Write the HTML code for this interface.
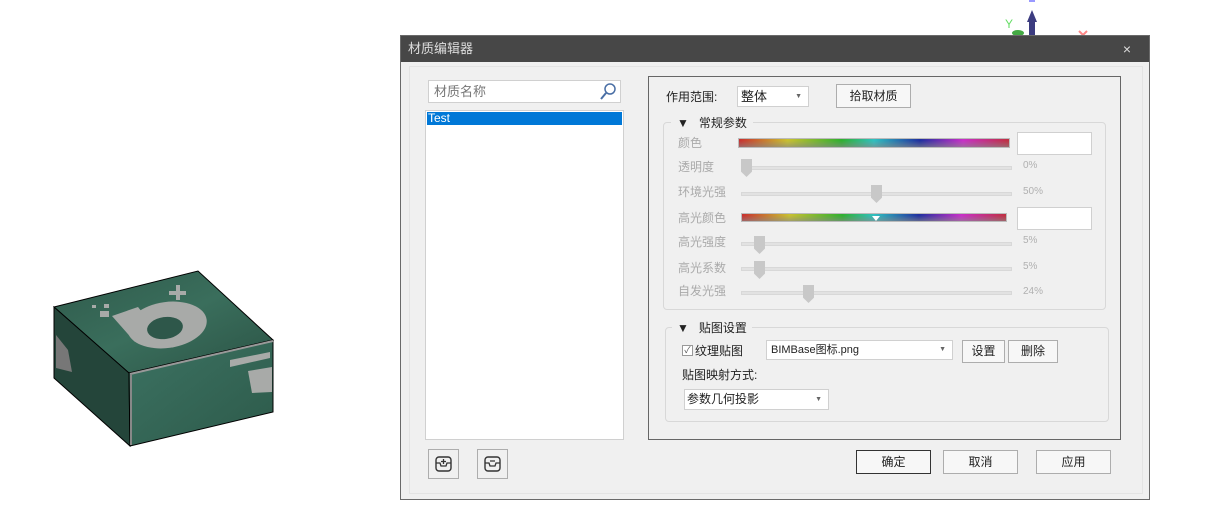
<!DOCTYPE html>
<html><head><meta charset="utf-8"><style>
*{box-sizing:border-box;margin:0;padding:0}
body{width:1210px;height:532px;background:#fff;position:relative;overflow:hidden;font-family:"Liberation Sans","Noto Sans CJK SC",sans-serif;font-size:12px;color:#222}
.a{position:absolute}
.dlg{left:400px;top:35px;width:750px;height:465px;background:#f0f0f0;border:1px solid #6a6a6a}
.tb{left:0;top:0;width:748px;height:26px;background:#474747;color:#ddd;font-size:13px;line-height:26px;padding-left:7px}
.box{background:#fff;border:1px solid #d0d0d0}
.lbl{color:#aaa;font-size:12px}
.track{height:4px;background:#e2e2e2;border:1px solid #d8d8d8}
.thumb{width:11px;height:18px;background:#c8c8c8;clip-path:polygon(0 0,100% 0,100% 70%,50% 100%,0 70%)}
.pct{color:#b0b0b0;font-size:10px}
.bar{background:linear-gradient(90deg,#c83030,#c8c030 18%,#30b030 38%,#30c0c0 50%,#2030a0 67%,#c830c8 83%,#c03040);border:1px solid #bbb}
.bar:after{content:"";position:absolute;left:0;top:0;right:0;bottom:0;background:linear-gradient(#0000 20%,#8889)}
.btn{background:#f7f7f7;border:1px solid #adadad;text-align:center;font-size:12px}
.fs{border:1px solid #d8d8d8;border-radius:4px}
.cb{font-size:7px;color:#666}
</style></head><body>
<svg class="a" style="left:0;top:0" width="300" height="460">
<defs><linearGradient id="g1" x1="0" y1="0" x2="1" y2="1"><stop offset="0" stop-color="#2f5a4b"/><stop offset=".5" stop-color="#3a6e5c"/><stop offset="1" stop-color="#2b5345"/></linearGradient>
<linearGradient id="g2" x1="0" y1="0" x2="1" y2="1"><stop offset="0" stop-color="#3c7262"/><stop offset="1" stop-color="#2d5a4a"/></linearGradient></defs>
<polygon points="54,307 198,271 273,340 129,373" fill="url(#g1)" stroke="#000"/>
<polygon points="54,307 129,373 130,446 54,378" fill="#24453a" stroke="#000"/>
<polygon points="129,373 273,340 273,412 130,446" fill="url(#g2)" stroke="#000"/>
<path d="M130,374 L273,341" stroke="#999" stroke-width="2"/>
<path d="M131,374 L131,445" stroke="#888" stroke-width="2"/>
<ellipse cx="167" cy="325" rx="40" ry="23" fill="#a8aaa8" transform="rotate(-8 167 325)"/>
<ellipse cx="165" cy="328" rx="18" ry="11" fill="#2e574a" transform="rotate(-8 165 328)"/>
<polygon points="112,316 138,307 150,322 135,342" fill="#a8aaa8"/>
<rect x="100" y="311" width="9" height="6" fill="#a8aaa8"/><rect x="104" y="304" width="5" height="4" fill="#a8aaa8"/><rect x="92" y="305" width="4" height="3" fill="#a8aaa8"/>
<rect x="169" y="291" width="17" height="4" fill="#a8aaa8"/><rect x="176" y="285" width="4" height="15" fill="#a8aaa8"/>
<polygon points="230,360 270,352 270,358 230,367" fill="#a8aaa8"/>
<polygon points="248,371 272,367 272,392 252,393" fill="#a8aaa8"/>
<polygon points="56,335 68,350 72,372 56,368" fill="#777"/>
</svg>
<svg class="a" style="left:995px;top:0" width="100" height="36">
<polygon points="37,10 42,22 40,22 40,36 34,36 34,22 32,22" fill="#3c3c80"/>
<text x="10" y="28" fill="#6d6" font-size="12" font-family="Liberation Sans">Y</text>
<ellipse cx="23" cy="33" rx="6" ry="3" fill="#4a4"/>
<path d="M84 31 l4 4 l4 -4" stroke="#f88" stroke-width="2" fill="none"/>
<rect x="34" y="0" width="6" height="2" fill="#99f"/>
</svg>
<div class="a dlg">
<div class="a tb">材质编辑器<span class="a" style="right:18px;top:0;font-size:14px;color:#ddd">×</span></div>
<div class="a" style="left:8px;top:30px;width:734px;height:428px;border:1px solid #e4e4e4"></div>
<div class="a box" style="left:27px;top:44px;width:193px;height:23px;color:#777;font-size:13px;line-height:21px;padding-left:5px">材质名称
<svg class="a" style="right:4px;top:2px" width="16" height="17"><circle cx="10" cy="6" r="5" fill="none" stroke="#4a6fa5" stroke-width="1.5"/><path d="M6 10 L1 16" stroke="#4a6fa5" stroke-width="2"/></svg></div>
<div class="a box" style="left:24px;top:74px;width:199px;height:330px"><div class="a" style="left:1px;top:1px;width:195px;height:13px;background:#0078d7;color:#fff;line-height:13px;padding-left:1px">Test</div></div>
<div class="a btn" style="left:27px;top:413px;width:31px;height:30px;background:#f0f0f0"><svg width="29" height="28"><rect x="7" y="7" width="15" height="14" rx="3" fill="none" stroke="#333" stroke-width="1.4"/><path d="M7 13h4l1 3h5l1-3h4M14.5 9v5M12 11.5h5" stroke="#333" stroke-width="1.3" fill="none"/></svg></div>
<div class="a btn" style="left:76px;top:413px;width:31px;height:30px;background:#f0f0f0"><svg width="29" height="28"><rect x="7" y="7" width="15" height="14" rx="3" fill="none" stroke="#333" stroke-width="1.4"/><path d="M7 13h4l1 3h5l1-3h4M12 11h5" stroke="#333" stroke-width="1.3" fill="none"/></svg></div>
<div class="a" style="left:247px;top:40px;width:473px;height:364px;border:1px solid #666"></div>
<div class="a" style="left:265px;top:52px;font-size:12px">作用范围:</div>
<div class="a box" style="left:336px;top:50px;width:72px;height:21px;font-size:13px;line-height:20px;padding-left:3px">整体<span class="a cb" style="right:6px;top:0">▼</span></div>
<div class="a btn" style="left:435px;top:48px;width:75px;height:24px;line-height:22px">拾取材质</div>
<div class="a fs" style="left:262px;top:86px;width:443px;height:188px"></div>
<div class="a" style="left:270px;top:78px;background:#f0f0f0;padding:0 6px;font-size:12px">▼&nbsp;&nbsp; 常规参数</div>
<div class="a lbl" style="left:277px;top:98px">颜色</div>
<div class="a bar" style="left:337px;top:102px;width:272px;height:10px"></div>
<div class="a box" style="left:616px;top:96px;width:75px;height:23px"></div>
<div class="a lbl" style="left:277px;top:122px">透明度</div>
<div class="a track" style="left:340px;top:130px;width:271px"></div><div class="a thumb" style="left:340px;top:123px"></div><div class="a pct" style="left:622px;top:124px">0%</div>
<div class="a lbl" style="left:277px;top:147px">环境光强</div>
<div class="a track" style="left:340px;top:156px;width:271px"></div><div class="a thumb" style="left:470px;top:149px"></div><div class="a pct" style="left:622px;top:150px">50%</div>
<div class="a lbl" style="left:277px;top:173px">高光颜色</div>
<div class="a bar" style="left:340px;top:177px;width:266px;height:9px"></div>
<div class="a" style="left:471px;top:180px;width:0;height:0;border-left:4px solid transparent;border-right:4px solid transparent;border-top:5px solid #fff"></div>
<div class="a box" style="left:616px;top:171px;width:75px;height:23px"></div>
<div class="a lbl" style="left:277px;top:197px">高光强度</div>
<div class="a track" style="left:340px;top:206px;width:271px"></div><div class="a thumb" style="left:353px;top:200px"></div><div class="a pct" style="left:622px;top:199px">5%</div>
<div class="a lbl" style="left:277px;top:223px">高光系数</div>
<div class="a track" style="left:340px;top:231px;width:271px"></div><div class="a thumb" style="left:353px;top:225px"></div><div class="a pct" style="left:622px;top:225px">5%</div>
<div class="a lbl" style="left:277px;top:246px">自发光强</div>
<div class="a track" style="left:340px;top:255px;width:271px"></div><div class="a thumb" style="left:402px;top:249px"></div><div class="a pct" style="left:622px;top:250px">24%</div>
<div class="a fs" style="left:264px;top:291px;width:444px;height:95px"></div>
<div class="a" style="left:271px;top:283px;background:#f0f0f0;padding:0 5px;font-size:12px">▼&nbsp;&nbsp; 贴图设置</div>
<div class="a" style="left:281px;top:309px;width:11px;height:11px;border:1px solid #999;background:#fff;font-size:9px;line-height:9px;color:#555;text-align:center">✓</div>
<div class="a" style="left:294px;top:306px">纹理贴图</div>
<div class="a box" style="left:365px;top:304px;width:187px;height:20px;font-size:11px;line-height:18px;padding-left:4px">BIMBase图标.png<span class="a cb" style="right:6px;top:0">▼</span></div>
<div class="a btn" style="left:561px;top:304px;width:43px;height:23px;line-height:21px">设置</div>
<div class="a btn" style="left:607px;top:304px;width:50px;height:23px;line-height:21px">删除</div>
<div class="a" style="left:281px;top:330px">贴图映射方式:</div>
<div class="a box" style="left:283px;top:353px;width:145px;height:21px;line-height:19px;padding-left:2px">参数几何投影<span class="a cb" style="right:6px;top:0">▼</span></div>
<div class="a btn" style="left:455px;top:414px;width:75px;height:24px;line-height:22px;border-color:#333">确定</div>
<div class="a btn" style="left:542px;top:414px;width:75px;height:24px;line-height:22px">取消</div>
<div class="a btn" style="left:635px;top:414px;width:75px;height:24px;line-height:22px">应用</div>
</div>
</body></html>
